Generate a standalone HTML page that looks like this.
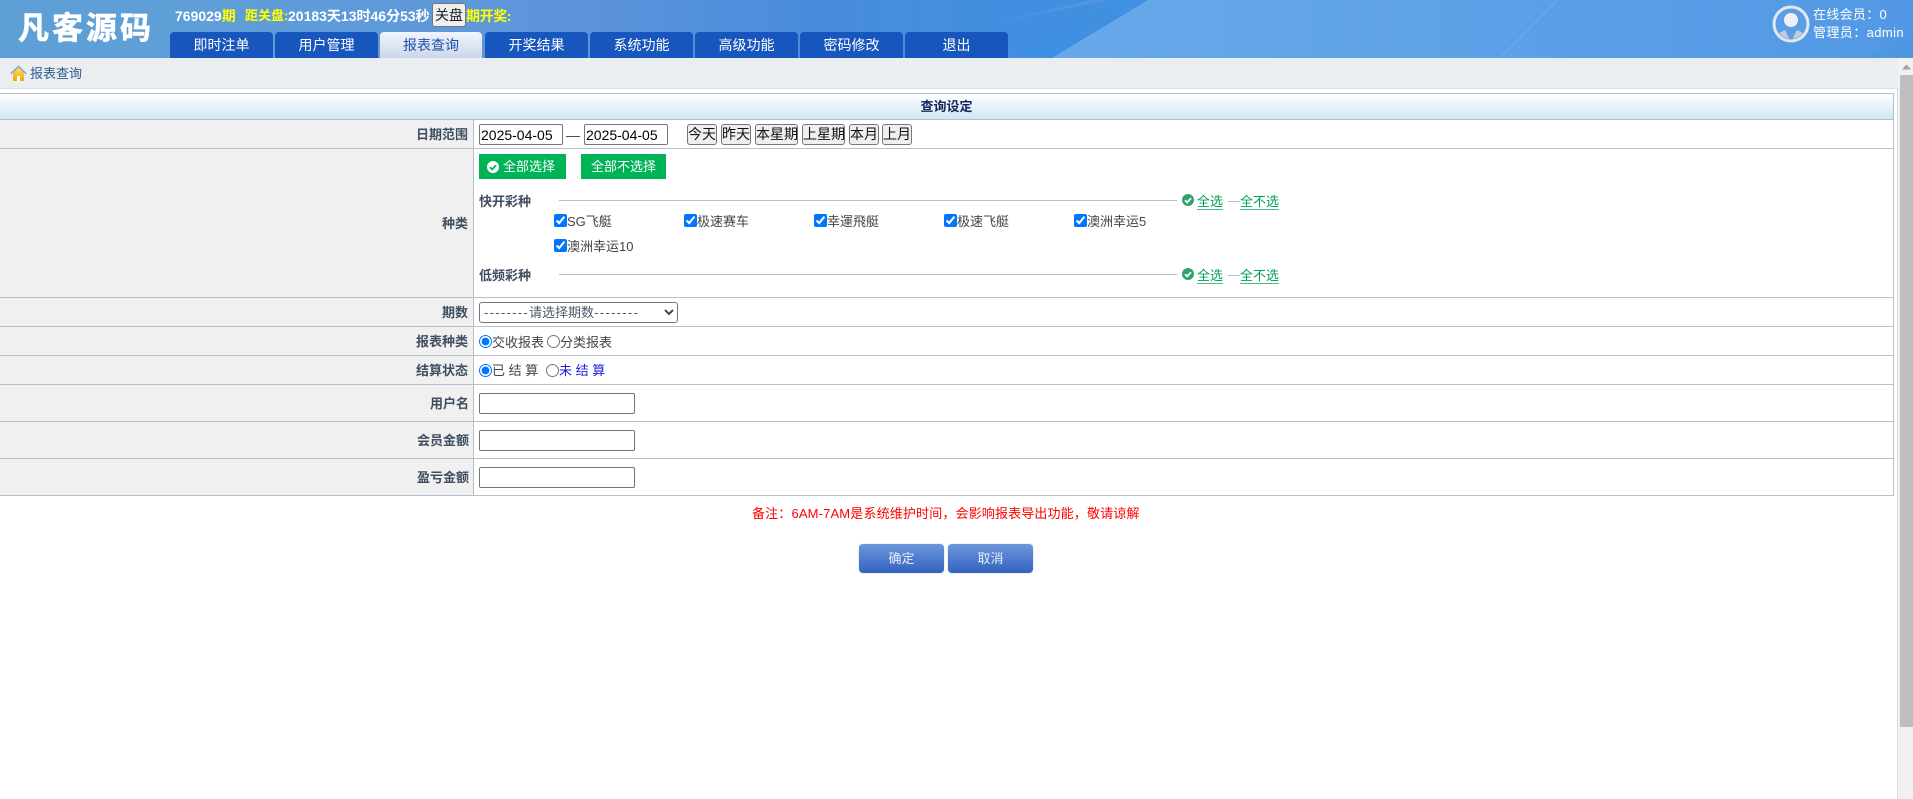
<!DOCTYPE html>
<html lang="zh"><head><meta charset="utf-8"><title>报表查询</title>
<style>
html,body{margin:0;padding:0;width:1913px;height:799px;overflow:hidden;background:#fff}
body{position:relative;font-family:"Liberation Sans","Noto Sans CJK SC",sans-serif;font-size:13px;color:#444}
.a,input,select,button{position:absolute}
.t{position:absolute;line-height:20px;white-space:nowrap}
.h{position:absolute;background:#b7bfcb}
.v{position:absolute;background:#b7bfcb}
.lb{position:absolute;left:0;width:468px;text-align:right;font-weight:bold;color:#3f4e60;line-height:20px;white-space:nowrap}
.tab{position:absolute;top:32px;height:26px;width:103px;background:#1756bc;border-radius:4px 4px 0 0;color:#fff;font-size:14px;line-height:26px;text-align:center}
.tab.on{background:linear-gradient(#f0f5fe,#cdd7ea);color:#1b52a8}
.y{color:#ff0}
input[type=text]{box-sizing:border-box;border:1px solid #767676;border-radius:2px;background:#fff;margin:0;padding:0 1px;font:14px "Liberation Sans",sans-serif;color:#000;height:21px}
.b{position:absolute;box-sizing:border-box;top:124px;height:21px;border:1px solid #767676;border-radius:3px;background:#efefef;color:#111;font:14px "Liberation Sans","Noto Sans CJK SC",sans-serif;padding:0;text-align:center;line-height:19px;white-space:nowrap;overflow:hidden}
input[type=checkbox],input[type=radio]{margin:0;width:13px;height:13px}
.g{position:absolute;box-sizing:border-box;height:25px;background:#00b357;color:#fff;line-height:25px;font-size:13px}
.u{color:#00a055;position:absolute;line-height:20px;white-space:nowrap;border-bottom:0}
.u:after{content:"";position:absolute;left:0;right:0;top:17px;height:1px;background:#00a055;opacity:.7}
.bt{position:absolute;top:544px;height:29px;width:85px;border-radius:4px;background:linear-gradient(#6d96da,#3363c0);color:#e9eefa;text-align:center;line-height:29px;box-shadow:0 0 1px #8aa}
</style></head><body>

<svg class="a" style="left:0;top:0" width="1913" height="58" viewBox="0 0 1913 58">
<defs><linearGradient id="hg" x1="0" x2="1" y1="0" y2="0">
<stop offset="0" stop-color="#5f9fd8"/><stop offset=".09" stop-color="#5f9fd8"/><stop offset=".3" stop-color="#5d94da"/><stop offset=".42" stop-color="#4a8cdc"/><stop offset=".55" stop-color="#3f90e2"/><stop offset="1" stop-color="#4f97e2"/></linearGradient>
<linearGradient id="hl" x1="0" x2="1" y1="0" y2="0"><stop offset="0" stop-color="#67a9ea"/><stop offset="1" stop-color="#5298e4"/></linearGradient></defs>
<rect width="1913" height="58" fill="url(#hg)"/>
<polygon points="925,0 1120,0 1000,58 925,58" fill="#4a90e0" opacity=".3"/>
<polygon points="1148,0 1913,0 1913,30 1867,58 1052,58" fill="url(#hl)"/>
<polygon points="1000,22 1090,0 1110,0" fill="#6fa9e6" opacity=".3"/>
<line x1="1500" y1="58" x2="1558" y2="0" stroke="#7ab6ee" stroke-width="1" opacity=".6"/>
</svg>

<div class="t" style="left:18px;top:12px;line-height:34px;font-size:31px;font-weight:bold;color:#fff;letter-spacing:3px;-webkit-text-stroke:.6px #fff">凡客源码</div>

<div class="t" style="left:175px;top:6px;font-size:14px;font-weight:bold;color:#fff">769029<span class="y">期</span></div>
<div class="t y" style="left:245px;top:6px;font-size:13px;font-weight:bold">距关盘:</div>
<div class="t" style="left:288px;top:6px;font-size:14px;font-weight:bold;color:#fff">20183天13时46分53秒</div>
<div class="b" style="left:432px;top:3px;width:34px;height:24px;line-height:22px;color:#222">关盘</div>
<div class="t y" style="left:466px;top:6px;font-size:14px;font-weight:bold;letter-spacing:-.4px">期开奖:</div>

<div class="tab" style="left:170px">即时注单</div>
<div class="tab" style="left:275px">用户管理</div>
<div class="tab on" style="left:380px;width:102px">报表查询</div>
<div class="tab" style="left:485px">开奖结果</div>
<div class="tab" style="left:590px">系统功能</div>
<div class="tab" style="left:695px">高级功能</div>
<div class="tab" style="left:800px">密码修改</div>
<div class="tab" style="left:905px">退出</div>

<svg class="a" style="left:1772px;top:5px" width="38" height="38" viewBox="0 0 38 38">
<defs><clipPath id="c"><circle cx="19" cy="19" r="15"/></clipPath></defs>
<circle cx="19" cy="19" r="17" fill="#5b9ee6" stroke="#e4e8f0" stroke-width="3"/>
<g clip-path="url(#c)"><circle cx="19" cy="15" r="7" fill="#eef0f6"/>
<path d="M3 38 V30 L13 25 L16 31 L19 38 L22 31 L25 25 L35 30 V38Z" fill="#c5cbd8"/></g>
</svg>
<div class="t" style="left:1813px;top:5px;color:#fff;letter-spacing:.3px">在线会员：0</div>
<div class="t" style="left:1813px;top:23px;color:#fff;letter-spacing:.4px">管理员：admin</div>

<div class="a" style="left:0;top:58px;width:1898px;height:30px;background:#ebeef1"></div>
<div class="a" style="left:0;top:88px;width:1898px;height:1px;background:#d3e0f0"></div>
<div class="a" style="left:1897px;top:88px;width:1px;height:711px;background:#d6dde6"></div>
<svg class="a" style="left:10px;top:65px" width="17" height="17" viewBox="0 0 17 17">
<defs><linearGradient id="hs" x1="0" x2="0" y1="0" y2="1"><stop offset="0" stop-color="#ffdf5a"/><stop offset="1" stop-color="#eda600"/></linearGradient></defs>
<path d="M3 8 L8.5 3 L14 8 V16 H3Z" fill="url(#hs)"/>
<rect x="7" y="11" width="3" height="5" fill="#fff"/>
<path d="M.8 9 L8.5 1.5 L16.2 9" fill="none" stroke="#8fa8c0" stroke-width="1.6"/>
</svg>
<div class="t" style="left:30px;top:64px;color:#2f5a8c">报表查询</div>

<!-- table -->
<div class="a" style="left:0;top:93px;width:1894px;height:1px;background:#b7bfcb"></div>
<div class="a" style="left:0;top:94px;width:1893px;height:25px;background:linear-gradient(#fff,#cde8f3)"></div>
<div class="t" style="left:0;top:97px;width:1893px;text-align:center;font-weight:bold;color:#13265c">查询设定</div>
<div class="a" style="left:0;top:120px;width:473px;height:375px;background:#f0f0f0"></div>
<div class="v" style="left:473px;top:120px;width:1px;height:375px"></div>
<div class="v" style="left:1893px;top:93px;width:1px;height:403px"></div>
<div class="h" style="left:0;top:119px;width:1894px;height:1px"></div>
<div class="h" style="left:0;top:148px;width:1894px;height:1px"></div>
<div class="h" style="left:0;top:297px;width:1894px;height:1px"></div>
<div class="h" style="left:0;top:326px;width:1894px;height:1px"></div>
<div class="h" style="left:0;top:355px;width:1894px;height:1px"></div>
<div class="h" style="left:0;top:384px;width:1894px;height:1px"></div>
<div class="h" style="left:0;top:421px;width:1894px;height:1px"></div>
<div class="h" style="left:0;top:458px;width:1894px;height:1px"></div>
<div class="h" style="left:0;top:495px;width:1894px;height:1px"></div>

<div class="lb" style="top:125px">日期范围</div>
<div class="lb" style="top:214px">种类</div>
<div class="lb" style="top:303px">期数</div>
<div class="lb" style="top:332px">报表种类</div>
<div class="lb" style="top:361px">结算状态</div>
<div class="lb" style="top:394px;width:469px">用户名</div>
<div class="lb" style="top:431px;width:469px">会员金额</div>
<div class="lb" style="top:468px;width:469px">盈亏金额</div>

<input type="text" value="2025-04-05" style="left:479px;top:124px;width:84px">
<div class="t" style="left:566px;top:125px;font-size:14px">—</div>
<input type="text" value="2025-04-05" style="left:584px;top:124px;width:84px">
<div class="b" style="left:687px;width:30px">今天</div>
<div class="b" style="left:721px;width:30px">昨天</div>
<div class="b" style="left:755px;width:43px">本星期</div>
<div class="b" style="left:802px;width:43px">上星期</div>
<div class="b" style="left:849px;width:30px">本月</div>
<div class="b" style="left:882px;width:30px">上月</div>

<div class="g" style="left:479px;top:154px;width:87px;padding-left:24px">全部选择</div>
<svg class="a" style="left:487px;top:161px" width="12" height="12" viewBox="0 0 12 12"><circle cx="6" cy="6" r="6" fill="#fff"/><path d="M3 6.200 L5.200 8.400 L9 4.200" fill="none" stroke="#00b357" stroke-width="1.800"/></svg>
<div class="g" style="left:581px;top:154px;width:85px;text-align:center">全部不选择</div>

<div class="t" style="left:479px;top:192px;font-weight:bold;color:#3f4e60">快开彩种</div>
<div class="h" style="left:559px;top:200px;width:618px;height:1px"></div>
<svg class="a" style="left:1182px;top:194px" width="12" height="12" viewBox="0 0 12 12"><circle cx="6" cy="6" r="6" fill="#2fa46a"/><path d="M3 6.200 L5.200 8.400 L9 4.200" fill="none" stroke="#fff" stroke-width="1.800"/></svg>
<div class="u" style="left:1197px;top:192px">全选</div>
<div class="h" style="left:1228px;top:201px;width:12px;height:1px"></div>
<div class="u" style="left:1240px;top:192px">全不选</div>

<input type="checkbox" checked style="left:554px;top:214px"><div class="t" style="left:567px;top:212px">SG飞艇</div>
<input type="checkbox" checked style="left:684px;top:214px"><div class="t" style="left:697px;top:212px">极速赛车</div>
<input type="checkbox" checked style="left:814px;top:214px"><div class="t" style="left:827px;top:212px">幸運飛艇</div>
<input type="checkbox" checked style="left:944px;top:214px"><div class="t" style="left:957px;top:212px">极速飞艇</div>
<input type="checkbox" checked style="left:1074px;top:214px"><div class="t" style="left:1087px;top:212px">澳洲幸运5</div>
<input type="checkbox" checked style="left:554px;top:239px"><div class="t" style="left:567px;top:237px">澳洲幸运10</div>

<div class="t" style="left:479px;top:266px;font-weight:bold;color:#3f4e60">低频彩种</div>
<div class="h" style="left:559px;top:274px;width:618px;height:1px"></div>
<svg class="a" style="left:1182px;top:268px" width="12" height="12" viewBox="0 0 12 12"><circle cx="6" cy="6" r="6" fill="#2fa46a"/><path d="M3 6.200 L5.200 8.400 L9 4.200" fill="none" stroke="#fff" stroke-width="1.800"/></svg>
<div class="u" style="left:1197px;top:266px">全选</div>
<div class="h" style="left:1228px;top:275px;width:12px;height:1px"></div>
<div class="u" style="left:1240px;top:266px">全不选</div>

<div class="a" style="box-sizing:border-box;left:479px;top:302px;width:199px;height:21px;border:1px solid #767676;border-radius:3px;background:#fff;line-height:19px;padding-left:4px;color:#4a5a6a;white-space:nowrap"><span style="letter-spacing:1.300px">--------</span>请选择期数<span style="letter-spacing:1.300px">--------</span></div>
<svg class="a" style="left:664px;top:309px" width="10" height="7" viewBox="0 0 10 7"><path d="M1 1 L5 5 L9 1" fill="none" stroke="#3b4b5e" stroke-width="2"/></svg>

<input type="radio" name="r1" checked style="left:479px;top:335px"><div class="t" style="left:492px;top:333px">交收报表</div>
<input type="radio" name="r1" style="left:547px;top:335px"><div class="t" style="left:560px;top:333px">分类报表</div>
<input type="radio" name="r2" checked style="left:479px;top:364px"><div class="t" style="left:492px;top:361px">已 结 算</div>
<input type="radio" name="r2" style="left:546px;top:364px"><div class="t" style="left:559px;top:361px;color:#1a1ae0">未 结 算</div>

<input type="text" style="left:479px;top:393px;width:156px">
<input type="text" style="left:479px;top:430px;width:156px">
<input type="text" style="left:479px;top:467px;width:156px">

<div class="t" style="left:752px;top:504px;color:#f00;letter-spacing:.15px">备注：6AM-7AM是系统维护时间，会影响报表导出功能，敬请谅解</div>
<div class="bt" style="left:859px">确定</div>
<div class="bt" style="left:948px">取消</div>

<!-- scrollbar -->
<div class="a" style="left:1898px;top:58px;width:15px;height:741px;background:#f1f1f1"></div>
<div class="a" style="left:1900px;top:75px;width:13px;height:652px;background:#bebebe"></div>
<svg class="a" style="left:1902px;top:64px" width="9" height="6" viewBox="0 0 9 6"><path d="M0 5.500 L4.500 .5 L9 5.500Z" fill="#a3a3a3"/></svg>
</body></html>
